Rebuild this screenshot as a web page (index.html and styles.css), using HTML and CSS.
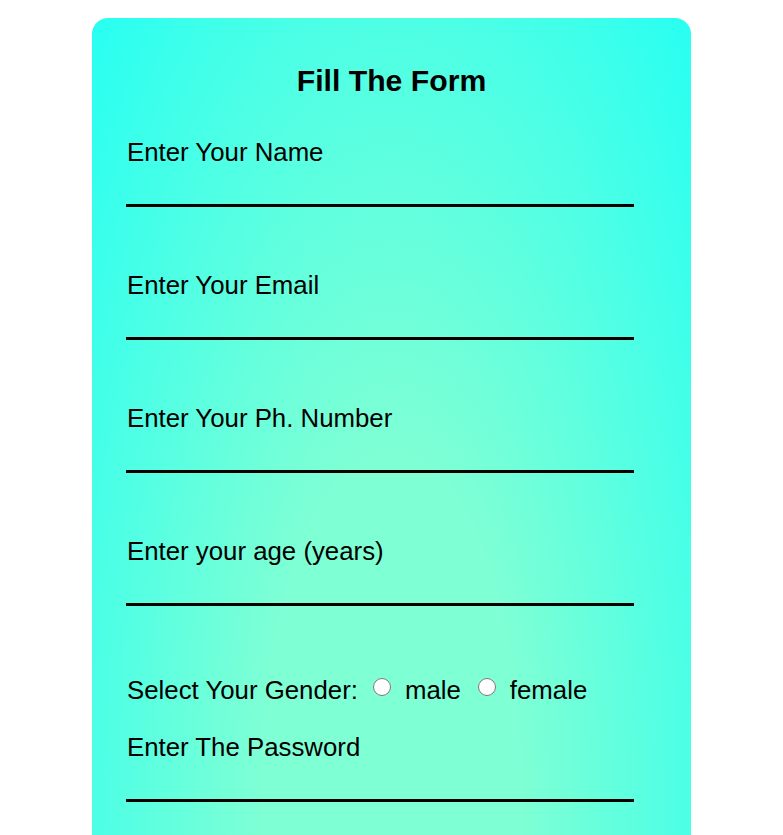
FILE: index.html
```html
<!DOCTYPE html>
<html lang="en">
<head>
<meta charset="utf-8">
<title>Fill The Form</title>
<link rel="stylesheet" href="styles.css">
</head>
<body>
<form class="card">
  <h2 class="title">Fill The Form</h2>
  <div class="field">
    <label class="label" for="name">Enter Your Name</label>
    <input class="input" id="name" type="text">
  </div>
  <div class="field">
    <label class="label" for="email">Enter Your Email</label>
    <input class="input" id="email" type="email">
  </div>
  <div class="field">
    <label class="label" for="phone">Enter Your Ph. Number</label>
    <input class="input" id="phone" type="tel">
  </div>
  <div class="field">
    <label class="label" for="age">Enter your age (years)</label>
    <input class="input" id="age" type="number">
  </div>
  <div class="gender">
    <span class="gender-title">Select Your Gender:</span><input class="radio" type="radio" name="gender" id="male"><label class="radio-label" for="male">male</label><input class="radio" type="radio" name="gender" id="female"><label class="radio-label" for="female">female</label>
  </div>
  <div class="field last">
    <label class="label" for="pass">Enter The Password</label>
    <input class="input" id="pass" type="password">
  </div>
</form>
</body>
</html>
```

FILE: styles.css
```css
html, body {
  margin: 0;
  padding: 0;
  background: #ffffff;
}
body {
  font-family: "Liberation Sans", Arial, sans-serif;
  color: #000;
  padding-top: 18px;
}
.card {
  box-sizing: border-box;
  width: 599px;
  height: 880px;
  margin: 0 auto;
  border-radius: 16px;
  padding: 46px 56px 0 35px;
  background: radial-gradient(ellipse 424px 1131px at 50% 782px, #7fffd4 30%, #00ffff 130%);
}
.title {
  margin: 0 0 39px 21px;
  font-size: 30.2px;
  line-height: 34px;
  font-weight: bold;
  text-align: center;
}
.field {
  margin-bottom: 63px;
}
.field.last {
  margin-bottom: 0;
}
.label {
  display: block;
  font-size: 25.8px;
  line-height: 30px;
}
.input {
  display: block;
  box-sizing: border-box;
  width: 508px;
  height: 40px;
  margin: 0 0 0 -1px;
  padding: 0;
  border: none;
  border-bottom: 3px solid #000;
  background: transparent;
  outline: none;
  font-size: 22px;
  font-family: inherit;
}
.gender {
  margin-top: 69px;
  margin-bottom: 27px;
  font-size: 25.8px;
  line-height: 30px;
  display: flex;
  align-items: center;
}
.radio {
  width: 18px;
  height: 18px;
  margin: -7px 14px 0 17px;
}
.radio-label {
  display: inline-block;
}
.gender-title + .radio {
  margin-left: 15px;
}
```
